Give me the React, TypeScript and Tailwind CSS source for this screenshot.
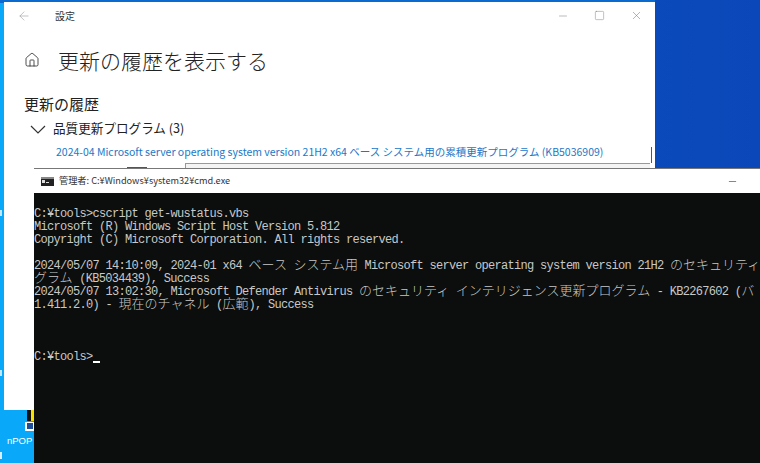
import { Home, Minus, Square, X, ArrowLeft } from 'lucide-react';

const CONSOLE_LINES = [
  'C:¥tools>cscript get-wustatus.vbs',
  'Microsoft (R) Windows Script Host Version 5.812',
  'Copyright (C) Microsoft Corporation. All rights reserved.',
  '',
  '2024/05/07 14:10:09, 2024-01 x64 ベース システム用 Microsoft server operating system version 21H2 のセキュリティ',
  'グラム (KB5034439), Success',
  '2024/05/07 13:02:30, Microsoft Defender Antivirus のセキュリティ インテリジェンス更新プログラム - KB2267602 (バ',
  '1.411.2.0) - 現在のチャネル (広範), Success',
  '',
  '',
  '',
];

// half width text and full width text need different sizes to land on the console grid
function ConsoleLine({ text }: { text: string }) {
  const runs = text.split(/([^\x00-\x7f¥]+)/);
  return (
    <div className="h-[13px] whitespace-pre">
      {runs.map((run, i) =>
        i % 2 === 1 ? (
          <span key={i} className="text-[13px] leading-[0px] tracking-normal font-light [font-family:'Noto_Sans_CJK_JP',sans-serif]">
            {run}
          </span>
        ) : (
          <span key={i}>{run}</span>
        ),
      )}
    </div>
  );
}

function SettingsWindow() {
  return (
    <div className="absolute left-[4px] top-[2px] w-[651px] h-[408px] bg-white text-[#222] [font-family:'Noto_Sans_CJK_JP',sans-serif]">
      <div className="flex items-center h-[27px] pl-[13px] pr-[12px]">
        <ArrowLeft size={14} strokeWidth={1} className="text-[#999]" />
        <span className="ml-[24px] text-[10px] text-[#333]">設定</span>
        <div className="ml-auto flex items-center gap-[25px] text-[#777]">
          <Minus size={12} strokeWidth={1} />
          <Square size={11} strokeWidth={1} />
          <X size={13} strokeWidth={1} />
        </div>
      </div>
      <div className="flex items-center pl-[20px] mt-[16px]">
        <Home size={16} strokeWidth={1.3} className="text-[#333]" />
        <h1 className="ml-[18px] text-[21px] leading-[30px] font-light">更新の履歴を表示する</h1>
      </div>
      <h2 className="pl-[20px] mt-[18px] text-[15px] leading-[22px]">更新の履歴</h2>
      <div className="flex items-center pl-[26px] mt-[3px]">
        <svg width="16" height="9" viewBox="0 0 16 9" fill="none" stroke="#333" strokeWidth="1.2" className="mt-[3px]">
          <path d="M1 1 L8 8 L15 1" />
        </svg>
        <span className="ml-[7px] text-[12.6px] leading-[20px]">品質更新プログラム (3)</span>
      </div>
      <div className="pl-[52px] mt-[6px] text-[10.5px] leading-[16px] text-[#1a78c8]">
        2024-04 Microsoft server operating system version 21H2 x64 ベース システム用の累積更新プログラム (KB5036909)
      </div>
    </div>
  );
}

function CmdWindow() {
  return (
    <div className="absolute left-[34px] top-[168px] w-[726px] h-[295px] flex flex-col border-t border-[#777]">
      <div className="flex items-center h-[24px] bg-white pl-[7px] pr-[22px] shrink-0">
        <div className="w-[13px] h-[9px] bg-[#222] border-t-2 border-[#888] flex items-start pl-[1px] pt-[1px] gap-[1px]">
          <div className="w-[3px] h-[3px] bg-[#ddd]" />
          <div className="w-[3px] h-[1px] mt-[2px] bg-[#ddd]" />
        </div>
        <span className="ml-[5px] text-[9.2px] text-[#333] [font-family:'Noto_Sans_CJK_JP',sans-serif]">管理者: C:¥Windows¥system32¥cmd.exe</span>
        <Minus size={11} strokeWidth={1.2} className="ml-auto text-[#222]" />
      </div>
      <div className="flex-1 overflow-hidden bg-[#0b0e0c] text-[#c8c8c8] pt-[15px] text-[12px] leading-[13px] tracking-[-0.7px] [font-family:'Liberation_Mono',monospace]">
        {CONSOLE_LINES.map((line, i) => (
          <ConsoleLine key={i} text={line} />
        ))}
        <div className="flex items-end h-[13px] whitespace-pre">
          C:¥tools&gt;
          <span className="w-[7px] h-[2px] mb-[1px] bg-white" />
        </div>
      </div>
    </div>
  );
}

export default function App() {
  return (
    <div className="relative w-[760px] h-[463px] overflow-hidden bg-gradient-to-r from-[#0a5ac8] to-[#0b47b8]">
      <div className="absolute left-0 top-0 w-[34px] h-full bg-[#0aa8f8]" />
      <div className="absolute left-0 top-0 w-[655px] h-[3px] bg-[#0a6ad0]" />
      <div className="absolute left-0 top-[210px] w-[2px] h-[6px] bg-[#bfe6fb]" />
      <div className="absolute left-0 top-[370px] w-[2px] h-[6px] bg-[#bfe6fb]" />
      <div className="absolute left-0 top-[452px] w-[2px] h-[7px] bg-[#d6f0fd]" />
      <SettingsWindow />
      <div className="absolute left-[185px] top-[163px] w-[465px] h-[5px] bg-[#f4f4f4] border-t border-l border-[#999]" />
      <div className="absolute left-[127px] top-[167px] w-[20px] h-[1px] bg-[#555]" />
      <div className="absolute left-[651px] top-[147px] w-[1px] h-[16px] bg-[#555]" />
      <div className="absolute left-[650px] top-[163px] w-[5px] h-[5px] bg-white" />
      <div className="absolute left-[27px] top-[410px] w-[4px] h-[11px] bg-[#111]" />
      <div className="absolute left-[31px] top-[410px] w-[3px] h-[11px] bg-[#f5e000]" />
      <div className="absolute left-[25px] top-[422px] w-[9px] h-[9px] bg-white">
        <div className="mt-[1px] ml-[2px] w-[6px] h-[6px] bg-[#1d4f9c]" />
      </div>
      <span className="absolute left-[7px] top-[434px] text-[9.5px] leading-[14px] text-white [font-family:'Liberation_Sans',sans-serif]">nPOP</span>
      <CmdWindow />
    </div>
  );
}
